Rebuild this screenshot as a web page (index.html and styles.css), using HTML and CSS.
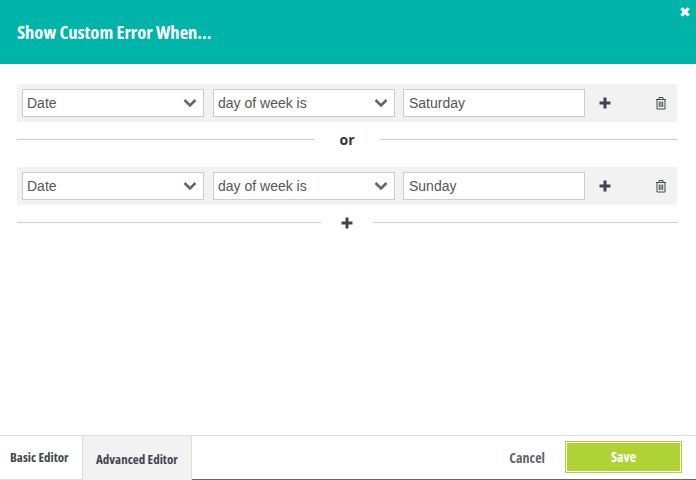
FILE: index.html
```html
<!DOCTYPE html>
<html lang="en">
  <head>
    <meta charset="UTF-8" />
    <title>Show Custom Error When...</title>
    <link rel="stylesheet" href="styles.css">
  </head>
  <body>
    <div class="modal">
      <header class="modal-header">
        <h1 class="modal-title">Show Custom Error When...</h1>
        <span class="close-btn">✖</span>
      </header>

      <main class="modal-body">
        <div class="condition-row">
          <div class="fake-select">
            <span>Date</span>
            <svg class="chevron" viewBox="0 0 14 10"><path d="M1.5 2 7 7.5 12.5 2" /></svg>
          </div>
          <div class="fake-select">
            <span>day of week is</span>
            <svg class="chevron" viewBox="0 0 14 10"><path d="M1.5 2 7 7.5 12.5 2" /></svg>
          </div>
          <input class="value-input" type="text" value="Saturday" />
          <span class="add-btn">
            <svg class="plus" viewBox="0 0 12 12"><path d="M6 0.5v11M0.5 6h11" /></svg>
          </span>
          <span class="delete-btn">
            <svg class="trash" viewBox="0 0 12 14">
              <path d="M1 3.5h10M4 3.5V1.5h4v2M2 3.5v9.5h8V3.5M4.3 5.5v5.5M6 5.5v5.5M7.7 5.5v5.5" />
            </svg>
          </span>
        </div>

        <div class="divider divider-or"><span>or</span></div>

        <div class="condition-row">
          <div class="fake-select">
            <span>Date</span>
            <svg class="chevron" viewBox="0 0 14 10"><path d="M1.5 2 7 7.5 12.5 2" /></svg>
          </div>
          <div class="fake-select">
            <span>day of week is</span>
            <svg class="chevron" viewBox="0 0 14 10"><path d="M1.5 2 7 7.5 12.5 2" /></svg>
          </div>
          <input class="value-input" type="text" value="Sunday" />
          <span class="add-btn">
            <svg class="plus" viewBox="0 0 12 12"><path d="M6 0.5v11M0.5 6h11" /></svg>
          </span>
          <span class="delete-btn">
            <svg class="trash" viewBox="0 0 12 14">
              <path d="M1 3.5h10M4 3.5V1.5h4v2M2 3.5v9.5h8V3.5M4.3 5.5v5.5M6 5.5v5.5M7.7 5.5v5.5" />
            </svg>
          </span>
        </div>

        <div class="divider divider-add">
          <svg class="plus" viewBox="0 0 12 12"><path d="M6 0.5v11M0.5 6h11" /></svg>
        </div>
      </main>

      <footer class="modal-footer">
        <div class="tabs">
          <div class="tab">Basic Editor</div>
          <div class="tab tab-active">Advanced Editor</div>
        </div>
        <div class="footer-actions">
          <span class="cancel-btn">Cancel</span>
          <span class="save-btn">Save</span>
        </div>
      </footer>
    </div>
  </body>
</html>
```

FILE: styles.css
```css
* {
  margin: 0;
  padding: 0;
  box-sizing: border-box;
}

body {
  font-family: "Liberation Sans", Arial, sans-serif;
  background-color: #ffffff;
  color: #555555;
}

.modal {
  display: flex;
  flex-direction: column;
  height: 480px;
}

.modal-header {
  display: flex;
  justify-content: space-between;
  height: 64px;
  background-color: #00b4aa;
  color: #ffffff;
}

.modal-title {
  font-family: "Open Sans", sans-serif;
  font-stretch: condensed;
  font-size: 18.5px;
  font-weight: 700;
  line-height: 24px;
  padding: 20px 0 0 17px;
}

.close-btn {
  font-size: 13.5px;
  line-height: 14px;
  padding: 6px 5px 0 0;
}

.modal-body {
  flex: 1;
  padding: 20px 19px 0 17px;
}

.condition-row {
  display: flex;
  align-items: center;
  height: 38px;
  padding-left: 5px;
  background-color: #f2f2f2;
}

.fake-select {
  display: flex;
  justify-content: space-between;
  align-items: center;
  width: 182px;
  height: 28px;
  margin-right: 9px;
  padding: 0 6px 0 4px;
  border: 1px solid #cccccc;
  background-color: #ffffff;
  font-size: 14px;
}

.chevron {
  width: 14px;
  height: 10px;
  fill: none;
  stroke: #666666;
  stroke-width: 2.6;
}

.value-input {
  width: 182px;
  height: 28px;
  margin-left: -1px;
  padding: 0 5px;
  border: 1px solid #cccccc;
  background-color: #ffffff;
  color: #555555;
  font-family: "Liberation Sans", Arial, sans-serif;
  font-size: 14px;
}

.add-btn {
  display: flex;
  margin-left: 14px;
}

.delete-btn {
  display: flex;
  margin-left: 44px;
}

.plus {
  width: 12px;
  height: 12px;
  fill: none;
  stroke: #3d4650;
  stroke-width: 3;
}

.trash {
  width: 12px;
  height: 14px;
  fill: none;
  stroke: #3d4d3d;
  stroke-width: 1;
}

.divider {
  display: flex;
  align-items: center;
  justify-content: center;
}

.divider::before,
.divider::after {
  content: "";
  flex: 1;
  height: 1px;
  background-color: #cccccc;
}

.divider-or {
  gap: 25px;
  height: 45px;
  padding-bottom: 10px;
  color: #333333;
  font-family: "Open Sans", sans-serif;
  font-size: 14px;
  font-weight: 700;
}

.divider-add {
  gap: 20px;
  height: 35px;
}

.modal-footer {
  display: flex;
  justify-content: space-between;
  height: 45px;
  border-top: 1px solid #dddddd;
  border-bottom: 1px solid #666666;
}

.tabs {
  display: flex;
}

.tab {
  width: 82px;
  padding-left: 10px;
  color: #3d4650;
  font-family: "Open Sans", sans-serif;
  font-stretch: condensed;
  font-size: 13px;
  font-weight: 700;
  line-height: 43px;
  border-bottom: 1px solid #dddddd;
  margin-bottom: -1px;
}

.tab-active {
  width: 110px;
  padding: 2px 0 0 13px;
  background-color: #f2f2f2;
  border: 1px solid #dddddd;
  border-top: 0;
  border-bottom: 0;
}

.footer-actions {
  display: flex;
  align-items: center;
  padding: 0 14px 1px 0;
}

.cancel-btn {
  margin-right: 20px;
  color: #5d6670;
  font-family: "Open Sans", sans-serif;
  font-stretch: condensed;
  font-size: 14px;
  font-weight: 700;
}

.save-btn {
  width: 117px;
  height: 32px;
  border: 1px solid #afd235;
  box-shadow: inset 0 0 0 1px #ffffff;
  background-color: #afd235;
  color: #ffffff;
  font-family: "Open Sans", sans-serif;
  font-stretch: condensed;
  font-size: 14px;
  font-weight: 700;
  line-height: 30px;
  text-align: center;
}
```
